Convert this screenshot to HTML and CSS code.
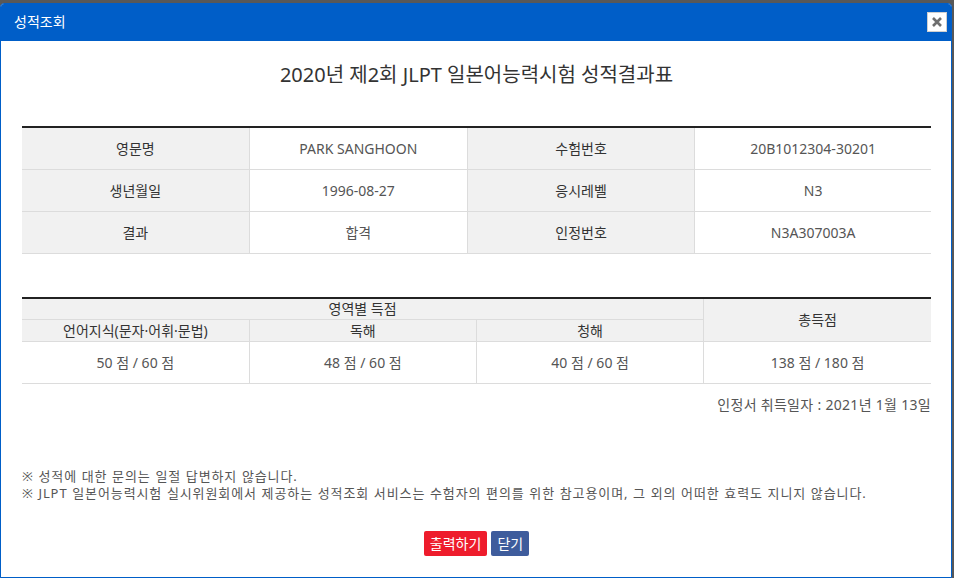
FILE: index.html
```html
<!DOCTYPE html>
<html lang="ko">
<head>
<meta charset="utf-8">
<title>성적조회</title>
<link rel="stylesheet" href="styles.css">
</head>
<body>
<div class="dialog">
  <div class="dialog-head">
    <span class="dialog-title">성적조회</span>
    <button class="close-btn" type="button" aria-label="닫기">
      <svg width="12" height="12" viewBox="0 0 12 12"><path d="M2 2 L10 10 M10 2 L2 10" stroke="#6f6f6f" stroke-width="2.6" stroke-linecap="butt"/></svg>
    </button>
  </div>
  <div class="dialog-body">
    <h2 class="report-title">2020년 제2회 JLPT 일본어능력시험 성적결과표</h2>

    <table class="info-table">
      <colgroup><col class="c25"><col class="c24"><col class="c25"><col class="c26"></colgroup>
      <tr><th>영문명</th><td>PARK SANGHOON</td><th>수험번호</th><td>20B1012304-30201</td></tr>
      <tr><th>생년월일</th><td>1996-08-27</td><th>응시레벨</th><td>N3</td></tr>
      <tr><th>결과</th><td>합격</td><th>인정번호</th><td>N3A307003A</td></tr>
    </table>

    <table class="score-table">
      <colgroup><col class="c25"><col class="c25"><col class="c25"><col class="c25"></colgroup>
      <tr class="h1"><th colspan="3">영역별 득점</th><th rowspan="2" class="total">총득점</th></tr>
      <tr class="h2"><th>언어지식(문자·어휘·문법)</th><th>독해</th><th>청해</th></tr>
      <tr class="data"><td>50 점 / 60 점</td><td>48 점 / 60 점</td><td>40 점 / 60 점</td><td>138 점 / 180 점</td></tr>
    </table>

    <p class="issue-date">인정서 취득일자 : 2021년 1월 13일</p>

    <div class="notes">
      <p>※ 성적에 대한 문의는 일절 답변하지 않습니다.</p>
      <p>※ JLPT 일본어능력시험 실시위원회에서 제공하는 성적조회 서비스는 수험자의 편의를 위한 참고용이며, 그 외의 어떠한 효력도 지니지 않습니다.</p>
    </div>

    <div class="actions">
      <button class="btn btn-print" type="button">출력하기</button>
      <button class="btn btn-close" type="button">닫기</button>
    </div>
  </div>
</div>
</body>
</html>
```
FILE: styles.css
```css
html, body {
  margin: 0;
  padding: 0;
}
body {
  background: #585858;
  width: 954px;
  height: 578px;
  overflow: hidden;
  font-family: "Noto Sans", "Noto Sans CJK KR", sans-serif;
  color: #333;
}
.dialog {
  margin-top: 3px;
  width: 950px;
  height: 573px;
  border: 1px solid #005ec8;
  border-radius: 4px 4px 0 0;
  background: #fff;
  overflow: hidden;
  display: flex;
  flex-direction: column;
}
.dialog-head {
  height: 37px;
  background: #005ec8;
  display: flex;
  align-items: center;
  justify-content: space-between;
  padding: 0 4px 0 13px;
  flex-shrink: 0;
}
.dialog-title {
  color: #fff;
  font-size: 14px;
  line-height: 18px;
  margin-top: -1px;
}
.close-btn {
  width: 20px;
  height: 20px;
  padding: 0;
  margin: -2px 0 0 0;
  border: 1px solid #cfcfcf;
  background: #fff;
  display: flex;
  align-items: center;
  justify-content: center;
  cursor: pointer;
}
.dialog-body {
  padding: 0 20px 0 21px;
  flex: 1;
}
.report-title {
  margin: 20px 0 37px;
  font-size: 20px;
  line-height: 28px;
  font-weight: 400;
  text-align: center;
  color: #333;
}
table {
  width: 100%;
  border-collapse: collapse;
  table-layout: fixed;
  font-size: 14px;
}
.c25 { width: 25%; }
.c24 { width: 24%; }
.c26 { width: 26%; }
th, td {
  text-align: center;
  padding: 0;
  border: 1px solid #dcdcdc;
  line-height: 20px;
}
th {
  background: #f1f1f1;
  font-weight: 400;
  color: #333;
}
td {
  color: #555;
}
table tr > :first-child { border-left: none; }
table tr > :last-child { border-right: none; }
.info-table {
  border-top: 2px solid #222;
}
.info-table tr:first-child > * { border-top: 2px solid #222; }
.info-table th, .info-table td {
  height: 41px;
}
.score-table {
  margin-top: 43px;
  border-top: 2px solid #222;
}
.score-table tr.h1 > * { border-top: 2px solid #222; }
.score-table .h1 th { height: 20px; }
.score-table .h2 th { height: 21px; }
.score-table .total { border-right: none; }
.score-table .data td { height: 41px; }
.issue-date {
  margin: 11px 0 0;
  text-align: right;
  font-size: 14px;
  line-height: 20px;
  letter-spacing: 0.3px;
  color: #555;
}
.notes {
  margin-top: 53px;
  font-size: 13px;
  line-height: 17px;
  letter-spacing: 0.9px;
  word-spacing: 0.4px;
  color: #555;
}
.notes p { margin: 0; }
.actions {
  margin-top: 29px;
  display: flex;
  justify-content: center;
  gap: 4px;
}
.btn {
  height: 25px;
  border: none;
  border-radius: 2px;
  color: #fff;
  font-family: "Noto Sans", "Noto Sans CJK KR", sans-serif;
  font-size: 14px;
  line-height: 20px;
  padding: 0 6px;
  cursor: pointer;
}
.btn-print { background: #ee1c2c; }
.btn-close { background: #3e5c9c; }
```
